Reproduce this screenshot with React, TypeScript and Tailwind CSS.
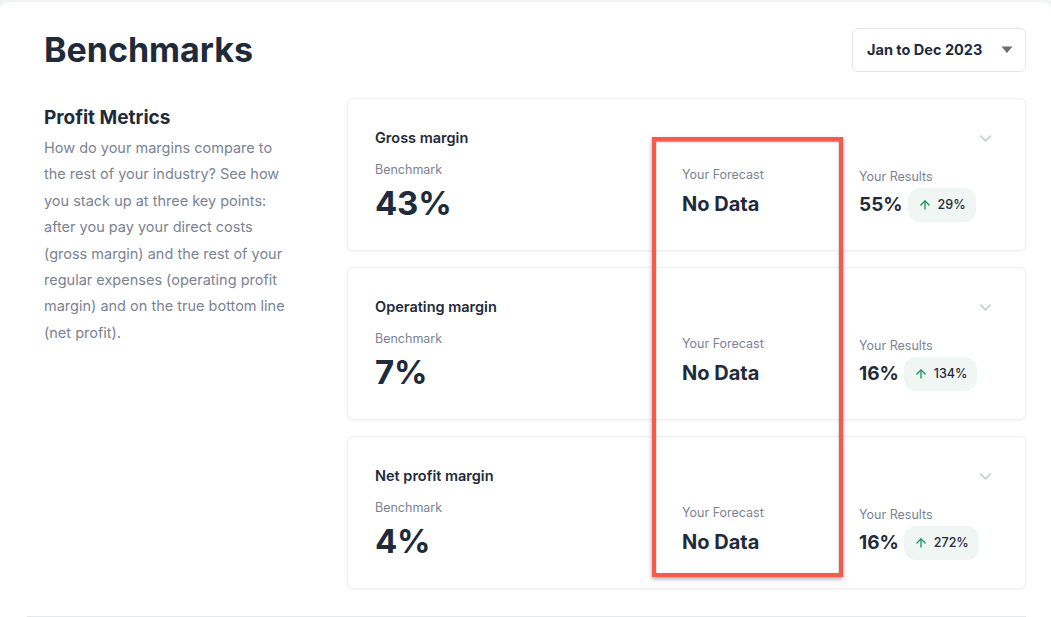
import { ChevronDown, ArrowUp } from "lucide-react"

type Metric = {
    title: string
    benchmark: string
    result: string
    change: string
}

const metrics: Metric[] = [
    { title: "Gross margin", benchmark: "43%", result: "55%", change: "29%" },
    { title: "Operating margin", benchmark: "7%", result: "16%", change: "134%" },
    { title: "Net profit margin", benchmark: "4%", result: "16%", change: "272%" },
]

const MetricCard = ({ m }: { m: Metric }) => {
    return (
        <div className="bg-white border border-[#eef0f2] rounded-md shadow-[0_1px_3px_rgba(16,24,40,0.05)] h-[153px] px-[27px] pt-[28px]">
            {/* TITLE */}
            <div className="flex items-center justify-between h-[22px]">
                <div className="text-[14.5px] font-semibold text-[#1f2b3b] leading-[22px]">{m.title}</div>
                <ChevronDown className="w-[19px] h-[19px] text-[#c9ccd2] mr-[3px]" strokeWidth={2} />
            </div>
            {/* VALUES */}
            <div className="flex mt-[12px]">
                <div className="w-[307px]">
                    <div className="text-[12.5px] text-[#7b8392] leading-[18px]">Benchmark</div>
                    <div className="text-[33px] font-bold text-[#1f2b3b] leading-[40px] mt-[4px] tracking-[-0.2px]">{m.benchmark}</div>
                </div>
                <div className="w-[177px] pt-[5px]">
                    <div className="text-[12.5px] text-[#7b8392] leading-[18px]">Your Forecast</div>
                    <div className="text-[20px] font-bold text-[#1f2b3b] leading-[26px] mt-[7px]">No Data</div>
                </div>
                <div className="pt-[7px]">
                    <div className="text-[12.5px] text-[#7b8392] leading-[18px]">Your Results</div>
                    <div className="flex items-center gap-[5px] mt-[2px]">
                        <div className="text-[19px] font-bold text-[#1f2b3b] leading-[26px]">{m.result}</div>
                        <div className="flex items-center gap-[6px] h-[34px] px-[10px] rounded-[12px] bg-[#eff6f3]">
                            <ArrowUp className="w-[14px] h-[14px] text-[#13915a]" strokeWidth={2.2} />
                            <span className="text-[12.5px] text-[#1f2b3b] font-medium">{m.change}</span>
                        </div>
                    </div>
                </div>
            </div>
        </div>
    )
}

const App = () => {
    return (
        <div className="w-[1051px] h-[617px] bg-[#f1f2f4] pt-[2px] overflow-hidden font-['Inter','Liberation_Sans',sans-serif]">
            <div className="relative bg-white rounded-t-lg h-[615px] pl-[27px] pr-[25px] pt-[26px]">
                {/* HEADER */}
                <div className="flex items-center justify-between pl-[17px] h-[44px]">
                    <h1 className="text-[34px] font-bold text-[#1f2b3b] leading-none">Benchmarks</h1>
                    <button className="flex items-center h-[44px] w-[174px] pl-[14px] pr-[12px] border border-[#e4e6ea] rounded-md bg-white">
                        <span className="text-[14.5px] font-bold text-[#1f2b3b]">Jan to Dec 2023</span>
                        <svg className="ml-auto" width="12" height="8" viewBox="0 0 12 8">
                            <path d="M0.5 0.5 H11.5 L6 7 Z" fill="#6b6f76" />
                        </svg>
                    </button>
                </div>

                {/* MAIN */}
                <div className="flex mt-[26px]">
                    {/* PROFIT METRICS */}
                    <div className="w-[320px] shrink-0 pl-[17px] pt-[8px]">
                        <h2 className="text-[19px] font-bold text-[#1f2b3b] leading-[24px]">Profit Metrics</h2>
                        <p className="w-[252px] text-[14.5px] text-[#7b8392] leading-[26.4px] mt-[5px]">
                            How do your margins compare to the rest of your industry? See how you stack up at three key points: after you pay your direct costs (gross margin) and the rest of your regular expenses (operating profit margin) and on the true bottom line (net profit).
                        </p>
                    </div>
                    {/* CARDS */}
                    <div className="flex-1 flex flex-col gap-[16px]">
                        {metrics.map((m) => (
                            <MetricCard key={m.title} m={m} />
                        ))}
                    </div>
                </div>

                {/* BOTTOM RULE */}
                <div className="absolute left-[27px] right-[25px] bottom-0 h-px bg-[#e6e7ea]" />

                {/* HIGHLIGHT */}
                <div className="absolute left-[652px] top-[135px] w-[191px] h-[440px] border-[4px] border-[#f65a4b] shadow-[0_2px_4px_rgba(0,0,0,0.35),inset_0_1px_2px_rgba(0,0,0,0.45)]" />
            </div>
        </div>
    )
}

export default App
